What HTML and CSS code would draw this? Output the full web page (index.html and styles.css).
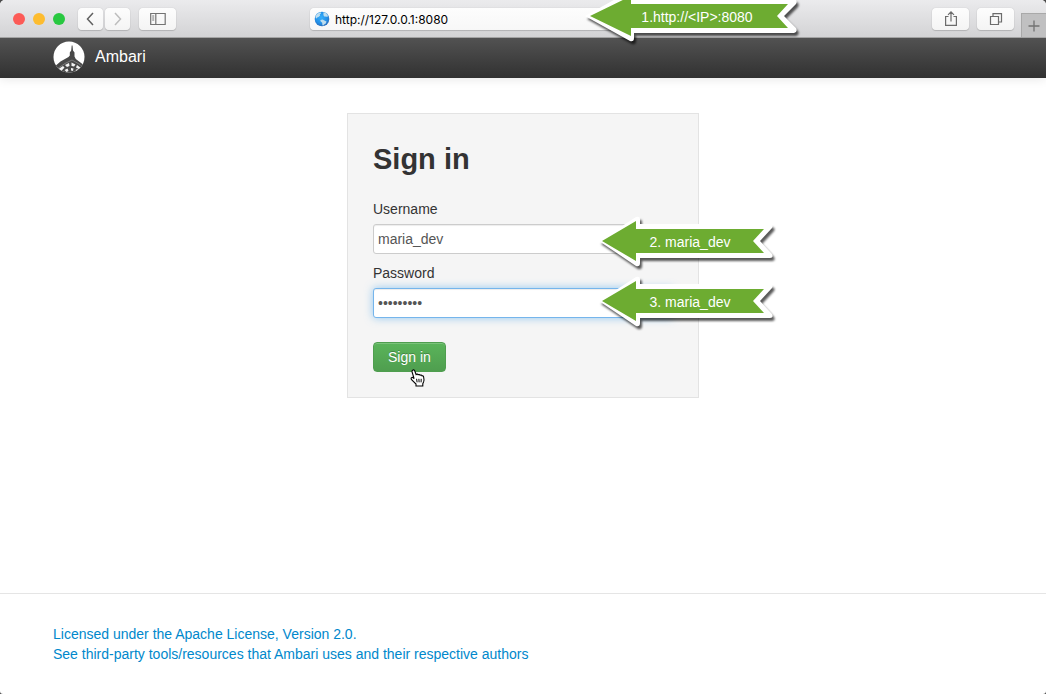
FILE: index.html
```html
<!DOCTYPE html>
<html lang="en">
<head>
<meta charset="utf-8">
<title>Ambari</title>
<link rel="stylesheet" href="styles.css">
</head>
<body>
<div class="window">
  <div class="toolbar">
    <div class="toolbar-left">
      <div class="lights">
        <button class="light light-close" aria-label="Close"></button>
        <button class="light light-min" aria-label="Minimize"></button>
        <button class="light light-max" aria-label="Zoom"></button>
      </div>
      <div class="nav-pair">
        <button class="tool tool-nav" aria-label="Back"><svg width="24" height="22" viewBox="0 0 24 22"><path d="M14 5L8.500 11l5.500 6" stroke="#606060" stroke-width="1.500"/></svg></button>
        <button class="tool tool-nav" aria-label="Forward"><svg width="24" height="22" viewBox="0 0 24 22"><path d="M9 5l5.500 6L9 17" stroke="#bdbdbd" stroke-width="1.500"/></svg></button>
      </div>
      <button class="tool" aria-label="Show sidebar"><svg width="16" height="14" viewBox="0 0 16 14"><path d="M.7 1.500h14.500v11H.7zM5.800 1.500v11M2.200 4h2M2.200 6h2M2.200 8h2" stroke="#737373" stroke-width="1.200"/></svg></button>
    </div>
    <div class="address">
      <svg class="globe" width="16" height="16" viewBox="0 0 16 16">
        <defs><radialGradient id="sea" cx=".45" cy=".4" r=".62"><stop offset="0" stop-color="#35aefa"/><stop offset=".65" stop-color="#2390e8"/><stop offset="1" stop-color="#2a69b5"/></radialGradient></defs>
        <circle cx="8" cy="8" r="7.300" fill="url(#sea)"/>
        <path d="M1.500 5.500C2.500 3.300 4 2 6.300 1.300l.9 1-1.500 1.300.5 1-1.700 1.500-1.300.3-.5 1-.9-.5zM9.500 1.200l2.400.8 2 2.500-.5 1.600-1.500-.6-1.200.3-1.300-1.600zM6.300 8.900l2.400-.3 2.600 1.400 1.200.5-.7 2-1.700 1-1 1.200-.7-.8-.2-2.200-1.500-1.200z" fill="#cfe6ee" opacity=".9"/>
      </svg>
      <input class="address-input" type="text" aria-label="Address" value="http://127.0.0.1:8080">
      <div class="callout callout-address">
        <svg width="226" height="60" viewBox="0 0 226 60">
          <path class="callout-edge" d="M5 30L50 5q4-1 4 3v5h160q4 1 2 5l-12 12 12 12q2 4-2 5H54v5q0 4-4 3z"/>
          <path class="callout-fill" d="M10 30L51 10v8h157l-11 12 11 12H51v8z"/>
        </svg>
        <span class="callout-text">1.http://&lt;IP&gt;:8080</span>
      </div>
    </div>
    <div class="toolbar-right">
      <button class="tool" aria-label="Share"><svg width="14" height="18" viewBox="0 0 14 18"><path d="M4.500 6.500H1.600v8.900h10.800V6.500H9.500M7 11.500V2M4 4.800l3-3 3 3" stroke="#6c6c6c" stroke-width="1.200"/></svg></button>
      <button class="tool" aria-label="Show all tabs"><svg width="14" height="16" viewBox="0 0 14 16"><path d="M1.500 5.500h8v8h-8zM4 5.500V2.700h8.500v8.300h-3" stroke="#6c6c6c" stroke-width="1.200"/></svg></button>
    </div>
    <button class="new-tab" aria-label="New tab"><svg width="12" height="12" viewBox="0 0 12 12"><path d="M6 .5v11M.5 6h11" stroke="#727272" stroke-width="1.300"/></svg></button>
  </div>

  <header class="navbar">
    <div class="container brand">
      <svg width="32" height="32" viewBox="0 0 32 32">
        <defs><clipPath id="disc"><circle cx="16" cy="16" r="15.500"/></clipPath></defs>
        <g clip-path="url(#disc)">
          <rect width="32" height="32" fill="#fff"/>
          <path d="M18.700 4.500h.8l.5 5 1.500 2v4l1.300 2.500 9.200 7V32H0v-5l7.500-6.500 8-4.500 1.300-1.500v-3l1.400-2z" fill="#484848"/>
          <path d="M3 28.500l9-6 7-3.500 8 4.500 4 4" fill="none" stroke="#9a9a9a" stroke-width=".6"/>
          <path d="M4 29l6-4 1.500 1.500-3.500 4zM12 24l4-2 .5 3-2.500 1zM18.500 21.500l4 2-1.500 2-2.500-.5zM24 24l4 3-1.500 1.500-3.500-2zM11.500 29l3-1.500 1 2.500-2 1zM18 27l2.500.5-.5 2.500-2-.5zM22.500 29l2-1 1 2-2 1z" fill="#f2f2f2"/>
        </g>
      </svg>
      <span>Ambari</span>
    </div>
  </header>

  <main class="content">
    <form class="login">
      <h1 class="login-title">Sign in</h1>
      <div class="field">
        <label for="username">Username</label>
        <div class="control">
          <input class="text-input" id="username" type="text" value="maria_dev">
          <div class="callout callout-username">
            <svg width="184" height="60" viewBox="0 0 184 60">
              <path class="callout-edge" d="M3 30L40 6q4-1 4 2v5h130q4 1 2 4l-12 13 12 13q2 4-2 4H44v5q0 4-4 3z"/>
              <path class="callout-fill" d="M6 30L40 10v8h128l-11 12 11 12H40v8z"/>
            </svg>
            <span class="callout-text">2. maria_dev</span>
          </div>
        </div>
      </div>
      <div class="field">
        <label for="password">Password</label>
        <div class="control">
          <input class="text-input is-focused" id="password" type="password" value="maria_dev">
          <div class="callout callout-password">
            <svg width="184" height="60" viewBox="0 0 184 60">
              <path class="callout-edge" d="M3 30L40 6q4-1 4 2v5h130q4 1 2 4l-12 13 12 13q2 4-2 4H44v5q0 4-4 3z"/>
              <path class="callout-fill" d="M6 30L40 10v8h128l-11 12 11 12H40v8z"/>
            </svg>
            <span class="callout-text">3. maria_dev</span>
          </div>
        </div>
      </div>
      <div class="actions">
        <button class="submit" type="button">Sign in</button>
        <svg class="pointer" width="16" height="18" viewBox="0 0 16 18"><path d="M2.600 1.200c1-.7 1.900 0 2.200.8l1.300 3.500c.7-.6 1.600-.4 2 .3.700-.5 1.600-.3 2 .4.800-.4 1.600-.1 2 .7.900-.3 1.300.2 1.500 1 .4 1.600.6 3.500 0 5l-.8 1.800v2.300H6v-1.900L1.800 11c-.8-1-.9-2-.3-2.400.7-.5 1.700 0 2.600 1L2.100 3c-.3-.8-.2-1.400.5-1.800z" fill="#fff" stroke="#000" stroke-width="1.100"/><path d="M6.600 9.800l.5 3.500M8.900 9.800l.2 3.500M11.200 9.800l-.1 3.500" stroke="#000" fill="none"/></svg>
      </div>
    </form>
  </main>

  <footer class="footer">
    <div class="container footer-links">
      <a href="#license">Licensed under the Apache License, Version 2.0.</a>
      <a href="#credits">See third-party tools/resources that Ambari uses and their respective authors</a>
    </div>
  </footer>
</div>
</body>
</html>
```
FILE: styles.css
```css
* { box-sizing: border-box; }
html { background: #4a4a4a; }
body {
  margin: 0;
  font: 14px/20px "Liberation Sans", Arial, sans-serif;
  color: #333;
}
button, input { font: inherit; margin: 0; }
svg { display: block; fill: none; }
.window {
  display: flex;
  flex-direction: column;
  min-height: 100vh;
  background: #fff;
  border-radius: 5px 5px 3px 3px;
}
.toolbar {
  position: relative;
  z-index: 2;
  display: grid;
  grid-template-columns: 1fr minmax(0, 426px) 1fr;
  align-items: center;
  height: 38px;
  border-bottom: 1px solid #a3a3a3;
  border-radius: 5px 5px 0 0;
  background: linear-gradient(#ebebed, #d3d3d5);
}
.toolbar-left, .toolbar-right, .lights, .nav-pair { display: flex; align-items: center; }
.toolbar-left { padding-left: 13px; }
.toolbar-right { justify-content: flex-end; gap: 8px; padding-right: 32px; }
.lights { gap: 8px; margin-right: 13px; }
.nav-pair { gap: 2px; margin-right: 9px; }
.light { width: 12px; height: 12px; padding: 0; border: 0; border-radius: 50%; }
.light-close { background: #fc5b57; }
.light-min { background: #fdbc2f; }
.light-max { background: #28c840; }
.tool {
  display: flex;
  align-items: center;
  justify-content: center;
  width: 37px;
  height: 22px;
  padding: 0;
  border: 0;
  border-radius: 4px;
  background: linear-gradient(#fdfdfd, #f4f4f4);
  box-shadow: 0 0 1px rgba(0, 0, 0, .25), 0 1px 1px rgba(0, 0, 0, .15);
}
.tool-nav { width: 25px; }
.address {
  position: relative;
  display: flex;
  align-items: center;
  gap: 5px;
  height: 22px;
  padding-left: 4px;
  border-radius: 4px;
  background: linear-gradient(#fdfdfd, #f7f7f7);
  box-shadow: 0 0 1px rgba(0, 0, 0, .25), 0 1px 1px rgba(0, 0, 0, .15);
}
.globe { flex: none; }
.address-input {
  flex: 1;
  min-width: 0;
  height: 22px;
  padding: 2px 0 0;
  border: 0;
  outline: 0;
  background: transparent;
  color: #000;
  font: 12px/20px Inter, sans-serif;
}
.new-tab {
  position: absolute;
  right: 0;
  bottom: 0;
  display: flex;
  align-items: center;
  justify-content: center;
  width: 25px;
  height: 24px;
  padding: 0;
  border: 1px solid #a9a9a9;
  border-width: 1px 0 0 1px;
  background: #c0c0c1;
}
.navbar {
  height: 40px;
  background: linear-gradient(#525252, #313131);
  box-shadow: 0 1px 10px rgba(0, 0, 0, .1);
}
.container { width: 100%; max-width: 940px; margin: 0 auto; }
.brand {
  display: flex;
  align-items: center;
  gap: 10px;
  height: 38px;
  color: #fff;
  font-size: 16px;
}
.content { flex: 1; padding: 35px 0; }
.login {
  width: 352px;
  margin: 0 auto;
  padding: 25px;
  border: 1px solid #e3e3e3;
  background: #f5f5f5;
}
.login-title { margin: 0 0 20px; font-size: 29px; line-height: 40px; }
.field { margin-bottom: 9px; }
.field label { display: block; margin-bottom: 5px; }
.control { position: relative; }
.text-input {
  display: block;
  width: 100%;
  height: 30px;
  padding: 4px;
  border: 1px solid #ccc;
  border-radius: 3px;
  outline: 0;
  background: #fff;
  color: #555;
  box-shadow: inset 0 1px 1px rgba(0, 0, 0, .075);
}
.is-focused {
  border-color: #75b5ec;
  box-shadow: inset 0 1px 1px rgba(0, 0, 0, .075), 0 0 8px rgba(82, 168, 236, .6);
}
.actions { position: relative; padding-top: 15px; }
.submit {
  display: block;
  height: 30px;
  padding: 0 14px;
  border: 1px solid #4f9e4f;
  border-radius: 4px;
  background: linear-gradient(#5ab45a, #4f9e4f);
  color: #fff;
  text-shadow: 0 -1px 0 rgba(0, 0, 0, .25);
  box-shadow: inset 0 1px 0 rgba(255, 255, 255, .2);
}
.pointer { position: absolute; left: 37px; bottom: -15px; }
.callout { position: absolute; z-index: 1; }
.callout svg { filter: drop-shadow(2px 3px 1px rgba(0, 0, 0, .65)); }
.callout-edge { fill: #fff; }
.callout-fill { fill: #6dac31; }
.callout-text {
  position: absolute;
  inset: 0;
  display: flex;
  align-items: center;
  justify-content: center;
  padding: 2px 0 0 4px;
  color: #fff;
  white-space: nowrap;
}
.callout-address { left: 270px; top: -22px; }
.callout-address .callout-text { padding-left: 8px; }
.callout-username, .callout-password { left: 223px; }
.callout-username { top: -13px; }
.callout-password { top: -17px; }
.footer { border-top: 1px solid #e5e5e5; padding: 30px 0; }
.footer-links { display: flex; flex-direction: column; align-items: flex-start; }
.footer a { color: #0088cc; text-decoration: none; }
```
